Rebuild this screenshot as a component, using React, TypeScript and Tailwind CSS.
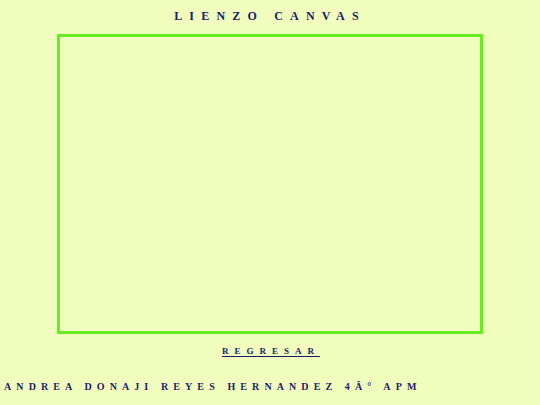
import * as React from 'react'

const serif = { fontFamily: '"Liberation Serif", "Times New Roman", serif' }

const App = () => {
  return (
    <div
      className="w-[540px] h-[405px] bg-[#f1fdbc] text-[#1b1b6e] font-bold flex flex-col overflow-hidden"
      style={serif}
    >
      <h1 className="text-center text-[12px] tracking-[7.2px] leading-none pt-[10px]">
        LIENZO CANVAS
      </h1>
      <div className="mx-auto mt-[12px] w-[426px] h-[300px] border-[3px] border-[#66ee22]" />
      <div className="text-center mt-[7px] leading-none">
        <a
          href="#"
          className="text-[9px] tracking-[6px] underline underline-offset-2 text-[#1b1b6e] pl-[2px]"
        >
          REGRESAR
        </a>
      </div>
      <p className="text-[10px] tracking-[5.1px] leading-none mt-[25px] pl-[4px]">
        ANDREA DONAJI REYES HERNANDEZ 4Â° APM
      </p>
    </div>
  )
}

export default App
